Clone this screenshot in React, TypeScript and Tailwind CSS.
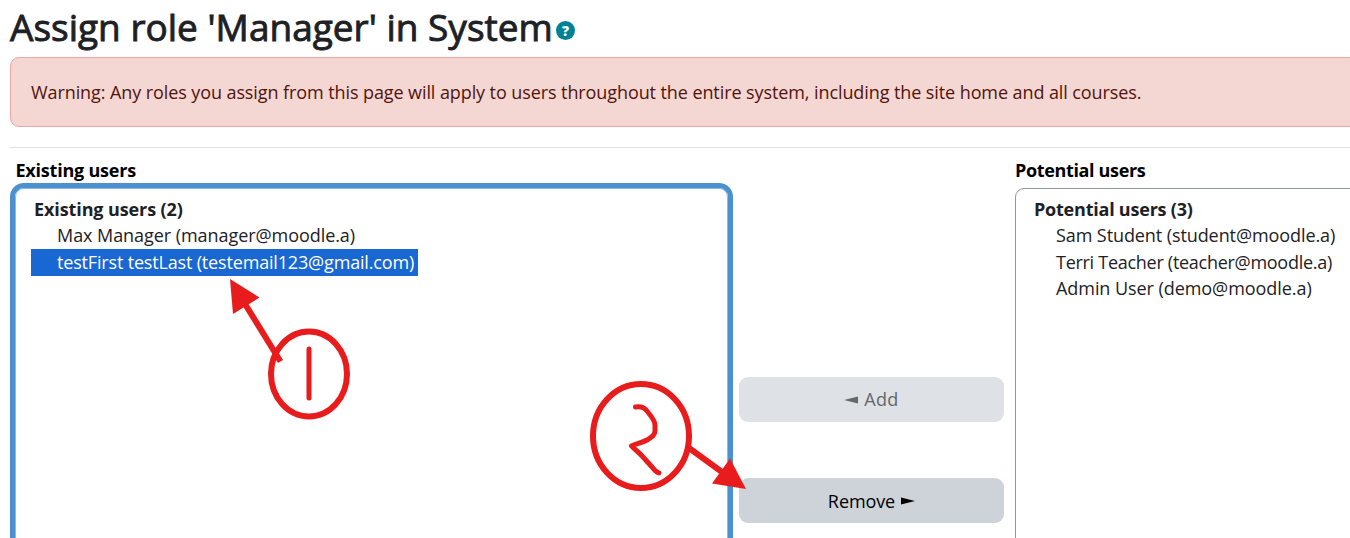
import type { ReactNode } from "react";

function Line({ children, className }: { children: ReactNode; className: string }) {
  return (
    <div className={`flex h-[26.5px] items-center whitespace-nowrap ${className}`}>
      <span>{children}</span>
    </div>
  );
}

function Annotations() {
  return (
    <svg
      className="pointer-events-none absolute left-0 top-0"
      width="1350"
      height="538"
      viewBox="0 0 1350 538"
      fill="none"
      stroke="#e81c1c"
      aria-hidden="true"
    >
      <ellipse cx="309" cy="374" rx="38" ry="42.5" strokeWidth="6" />
      <path d="M309 349V398" strokeWidth="5" strokeLinecap="round" />
      <path d="M280.500 361.500L245 304" strokeWidth="6" />
      <path d="M230 279L259.500 297.500L233 314Z" fill="#e81c1c" stroke="none" />
      <ellipse cx="641" cy="436" rx="48" ry="52" strokeWidth="6" />
      <path
        d="M635.500 407C641 406 644 407 647 411C652 417 655 421 655 425V431C655 435 652 437 648 439.500C642 443 636 443.500 631.500 446C634 449 639 452 643 457L652 467C655 471 656 472 659 473"
        strokeWidth="5"
        strokeLinecap="round"
        strokeLinejoin="round"
      />
      <path d="M689 448L722 472" strokeWidth="6" />
      <path d="M746 489L730 458.500L712 483.500Z" fill="#e81c1c" stroke="none" />
    </svg>
  );
}

export default function App() {
  return (
    <main className="relative flex h-[538px] w-[1350px] flex-col overflow-hidden bg-white pl-[10px] font-['Open_Sans','Noto_Sans',sans-serif] text-[18px] tracking-[-0.09px] text-[#1d2125]">
      <header className="flex h-[57px] shrink-0 items-center whitespace-nowrap">
        <h1 className="w-[543px] pb-[4px] text-[37px] font-normal leading-[52px] tracking-normal [-webkit-text-stroke:0.9px_#1d2125]">
          Assign role 'Manager' in System
        </h1>
        <button
          aria-label="Help"
          className="mt-[4px] ml-[3px] flex size-[19px] items-center justify-center rounded-full bg-[#008196] text-[14px] font-extrabold leading-none text-white"
        >
          ?
        </button>
      </header>

      <div className="-mr-5 flex h-[70px] shrink-0 items-center rounded-[9px] border border-[#eba7a3] bg-[#f4d6d2] pl-[20px] text-[#51140d]">
        <p className="whitespace-nowrap">
          Warning: Any roles you assign from this page will apply to users throughout the entire system, including the site home and all courses.
        </p>
      </div>

      <hr className="mt-[20px] shrink-0 border-[#dedfe0]" />

      <div className="flex h-[420px] shrink-0">
        <section className="flex w-[723px] shrink-0 flex-col px-[5px]">
          <label className="flex h-[40px] shrink-0 items-center pl-[0.5px] pt-[5px] font-bold tracking-[-0.22px] text-black">
            <span>Existing users</span>
          </label>
          <div className="h-[400px] shrink-0 rounded-[9px] border border-[#8bb9e5] pl-[15px] pt-[7px] shadow-[0_0_0_5px_#4b90cf]">
            <Line className="pl-[3px] font-bold tracking-[-0.1px]">Existing users (2)</Line>
            <Line className="pl-[26px] tracking-[-0.06px]">Max Manager (manager@moodle.a)</Line>
            <Line className="w-[387px] bg-[#1967d2] pl-[26px] tracking-[-0.17px] text-white">
              testFirst testLast (testemail123@gmail.com)
            </Line>
          </div>
        </section>

        <div className="ml-[6px] flex w-[265px] shrink-0 flex-col gap-[56px] pt-[229px]">
          <button className="flex h-[45px] items-center justify-center gap-[6px] rounded-[9px] bg-[#dee1e5] text-[#656769]">
            <svg width="14" height="8" viewBox="0 0 14 8" fill="currentColor" aria-hidden="true">
              <path d="M0 4L14 .5V7.500Z" />
            </svg>
            <span className="tracking-[0.3px]">Add</span>
          </button>
          <button className="flex h-[45px] items-center justify-center gap-[6px] rounded-[9px] bg-[#ced3da] pt-px text-black">
            <span>Remove</span>
            <svg width="14" height="8" viewBox="0 0 14 8" fill="currentColor" aria-hidden="true">
              <path d="M14 4L0 .5V7.500Z" />
            </svg>
          </button>
        </div>

        <section className="ml-[11px] flex w-[360px] shrink-0 flex-col">
          <label className="flex h-[40px] shrink-0 items-center pt-[5px] font-bold tracking-[-0.35px] text-black">
            <span>Potential users</span>
          </label>
          <div className="h-[400px] shrink-0 rounded-[9px] border border-[#8f959e] pl-[15px] pt-[7px]">
            <Line className="pl-[3px] font-bold tracking-[-0.22px]">Potential users (3)</Line>
            <Line className="pl-[25px]">Sam Student (student@moodle.a)</Line>
            <Line className="pl-[25px] tracking-[-0.28px]">Terri Teacher (teacher@moodle.a)</Line>
            <Line className="pl-[25px] tracking-[-0.06px]">Admin User (demo@moodle.a)</Line>
          </div>
        </section>
      </div>
      <Annotations />
    </main>
  );
}
